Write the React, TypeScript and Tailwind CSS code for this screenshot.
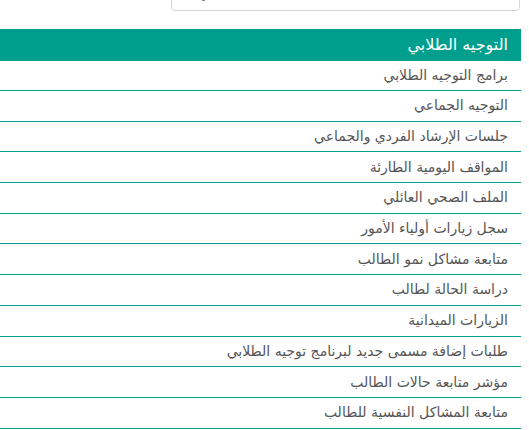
import * as React from "react";

const items = [
  "برامج التوجيه الطلابي",
  "التوجيه الجماعي",
  "جلسات الإرشاد الفردي والجماعي",
  "المواقف اليومية الطارئة",
  "الملف الصحي العائلي",
  "سجل زيارات أولياء الأمور",
  "متابعة مشاكل نمو الطالب",
  "دراسة الحالة لطالب",
  "الزيارات الميدانية",
  "طلبات إضافة مسمى جديد لبرنامج توجيه الطلابي",
  "مؤشر متابعة حالات الطالب",
  "متابعة المشاكل النفسية للطالب",
];

export default function App() {
  return (
    <div
      dir="rtl"
      className="h-[430px] w-[529px] overflow-hidden bg-white"
      style={{ fontFamily: '"DejaVu Sans", sans-serif' }}
    >
      <div className="flex pl-[171px] pr-[9px]">
        <div className="relative -mt-[23px] h-[34px] flex-1 rounded-[4px] border border-[#d4d4d4] bg-white">
          <span className="absolute bottom-[9px] left-[30px] h-[2px] w-[3px] rounded-full bg-[#6b7a8c]" />
        </div>
      </div>

      <div className="mt-[18px] mr-[8px]">
        <div className="flex h-[32px] items-center bg-[#009e8c] pr-[13px] text-[16px] text-white">
          التوجيه الطلابي
        </div>
        {items.map((item, i) => (
          <div
            key={i}
            className={
              i === 0
                ? "flex h-[30px] items-center border-b border-[#00a08e] pr-[13px] text-[14px] text-[#555555]"
                : "flex h-[30.7px] items-center border-b border-[#00a08e] pr-[13px] text-[14px] text-[#555555]"
            }
          >
            {item}
          </div>
        ))}
      </div>
    </div>
  );
}
